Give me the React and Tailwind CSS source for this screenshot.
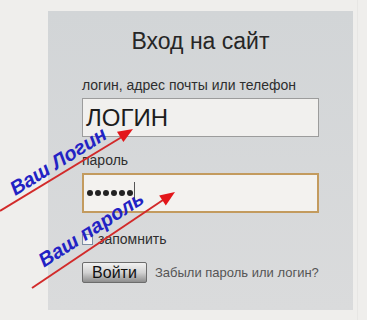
import React from "react";

export default function App() {
  const font = { fontFamily: '"Liberation Sans", Arial, sans-serif' };
  return (
    <div
      className="relative w-[367px] h-[320px] overflow-hidden bg-[#efeeec] pt-[11px] pl-[48px]"
      style={font}
    >
      <div className="w-[305px] h-[299px] bg-gradient-to-b from-[#d2d5d7] to-[#dadbdc] flex flex-col">
        <div className="mt-[17px] text-center text-[23px] leading-[26px] text-[#262626]">
          Вход на сайт
        </div>
        <div className="pl-[34px] flex flex-col">
          <div className="mt-[23px] text-[14px] leading-[16px] text-[#2e2e2e]">
            логин, адрес почты или телефон
          </div>
          <div className="mt-[5px] w-[237px] h-[39px] border border-[#9c9c9c] bg-[#f1f0ee] flex items-center pl-[3px] text-[24px] leading-[28px] text-[#1c1c1c]">
            ЛОГИН
          </div>
          <div className="mt-[15px] text-[14px] leading-[16px] text-[#2e2e2e]">
            пароль
          </div>
          <div className="mt-[5px] w-[237px] h-[40px] border-2 border-[#c39b5e] bg-[#f3f2ef] flex items-center pl-[3px]">
            <div className="flex gap-[2px]">
              <span className="w-[6px] h-[6px] rounded-full bg-[#222]" />
              <span className="w-[6px] h-[6px] rounded-full bg-[#222]" />
              <span className="w-[6px] h-[6px] rounded-full bg-[#222]" />
              <span className="w-[6px] h-[6px] rounded-full bg-[#222]" />
              <span className="w-[6px] h-[6px] rounded-full bg-[#222]" />
              <span className="w-[6px] h-[6px] rounded-full bg-[#222]" />
            </div>
            <span className="ml-[1px] w-[1px] h-[22px] bg-[#555]" />
          </div>
          <div className="mt-[18px] flex items-center h-[16px]">
            <span className="w-[11px] h-[11px] border border-[#7f8fa3] bg-gradient-to-br from-[#e4e4e4] to-[#ffffff]" />
            <span className="ml-[5px] text-[14px] leading-[16px] text-[#2e2e2e]">
              запомнить
            </span>
          </div>
          <div className="mt-[15px] flex items-center">
            <div className="w-[65px] h-[21px] rounded-[2px] border border-[#6c6c6c] bg-gradient-to-b from-[#f2f2f2] via-[#d2d2d2] to-[#8e8e8e] flex items-center justify-center text-[16px] leading-[18px] text-[#111]">
              Войти
            </div>
            <span className="ml-[8px] text-[13px] leading-[16px] text-[#555]">
              Забыли пароль или логин?
            </span>
          </div>
        </div>
      </div>
      <div className="absolute top-0 left-[357px] w-[1px] h-[320px] bg-[#e7e6e4]" />

      <svg
        className="absolute left-0 top-0 pointer-events-none"
        width="367"
        height="320"
        viewBox="0 0 367 320"
      >
        <line x1="0" y1="211" x2="121" y2="137.5" stroke="#d22a2a" strokeWidth="2" />
        <polygon points="133,129 123.4,142 117,131.8" fill="#e3161a" />
        <line x1="32" y1="288" x2="163" y2="200" stroke="#d22a2a" strokeWidth="2" />
        <polygon points="175,192 165.8,205.4 159.2,195.4" fill="#e3161a" />
      </svg>

      <div className="absolute left-[58px] top-[161px] -translate-x-1/2 -translate-y-1/2 -rotate-[32deg] whitespace-nowrap text-[20px] leading-[22px] font-bold italic text-[#2222c4]">
        Ваш Логин
      </div>
      <div className="absolute left-[91px] top-[229px] -translate-x-1/2 -translate-y-1/2 -rotate-[33deg] whitespace-nowrap text-[20px] leading-[22px] font-bold italic text-[#2222c4]">
        Ваш пароль
      </div>
    </div>
  );
}
